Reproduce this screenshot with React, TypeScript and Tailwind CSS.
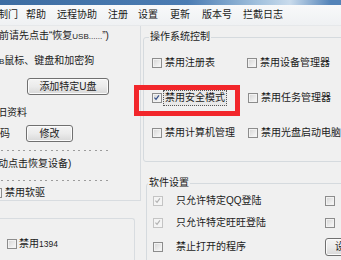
import React from "react";

function Box({ checked = false, disabled = false }: { checked?: boolean; disabled?: boolean }) {
  return (
    <span
      className={
        disabled
          ? "relative block w-[10px] h-[10px] shrink-0 border border-[#c4c4c4] bg-[#f4f4f4]"
          : "relative block w-[10px] h-[10px] shrink-0 border border-[#8c8c8c] bg-gradient-to-br from-[#d4d4d4] to-[#fbfbfb] shadow-[inset_0_0_0_1px_#f2f2f2]"
      }
    >
      {checked && (
        <svg viewBox="0 0 10 10" className="absolute left-0 top-0 w-[8px] h-[8px]">
          <path
            d="M1.8 4.6 L3.8 6.8 L7.4 1.8"
            fill="none"
            stroke={disabled ? "#b0b0b0" : "#2f4a86"}
            strokeWidth="1.4"
          />
        </svg>
      )}
    </span>
  );
}

function Btn({ children, className }: { children: React.ReactNode; className: string }) {
  return (
    <div
      className={
        "flex items-center justify-center shrink-0 border border-[#707070] rounded-[3px] bg-gradient-to-b from-[#f4f4f4] via-[#ebebeb] to-[#d8d8d8] shadow-[inset_0_0_0_1px_#fbfbfb] " +
        className
      }
    >
      {children}
    </div>
  );
}

function Dots() {
  return (
    <div className="flex gap-[3.5px] h-[1px] pl-[1px]">
      {Array.from({ length: 20 }).map((_, i) => (
        <span key={i} className="block w-[2px] h-[1px] bg-[#9c9c9c]" />
      ))}
    </div>
  );
}

export default function App() {
  return (
    <div className="relative w-[341px] h-[260px] overflow-hidden bg-[#f0f0f0] text-[10px] leading-[12px] text-[#1b1b1b] font-['Liberation_Sans','Noto_Sans_CJK_SC',sans-serif] whitespace-nowrap">
      <div className="h-[5px] bg-[linear-gradient(90deg,#3d6da2_0%,#4b7cb3_55%,#9fbfdc_75%,#c9dbec_85%,#5383b8_97%)]" />
      <div className="h-[21px] flex items-center bg-gradient-to-b from-[#f8f9fa] to-[#eff1f3] border-b border-[#e6e8ea]">
        <span className="ml-[-2px] w-[28px] shrink-0">制门</span>
        <span className="w-[31px] shrink-0">帮助</span>
        <span className="w-[51px] shrink-0">远程协助</span>
        <span className="w-[30px] shrink-0">注册</span>
        <span className="w-[32px] shrink-0">设置</span>
        <span className="w-[32px] shrink-0">更新</span>
        <span className="w-[41px] shrink-0">版本号</span>
        <span className="shrink-0">拦截日志</span>
      </div>

      <div className="flex h-[234px]">
        {/* left column */}
        <div className="w-[141px] shrink-0 flex flex-col">
          <div className="h-[177px] border-r border-b border-[#d8dce0] flex flex-col">
            <div className="mt-[3px] h-[14px] leading-[14px] ml-[-1px]">
              前请先点击“恢复<span className="text-[8px]">USB......</span>”)
            </div>
            <div className="mt-[11px] h-[14px] leading-[14px] ml-[-1px]">
              <span className="text-[8px]">B</span>鼠标、键盘和加密狗
            </div>
            <div className="mt-[10px] flex">
              <Btn className="ml-[27px] w-[82px] h-[17px]">添加特定U盘</Btn>
            </div>
            <div className="mt-[11px] h-[14px] leading-[14px] ml-[-3px]">旧资料</div>
            <div className="mt-[5px] h-[17px] flex items-center">
              <span className="w-[26px] shrink-0">码</span>
              <Btn className="w-[47px] h-[17px]">修改</Btn>
            </div>
            <div className="mt-[8px]">
              <Dots />
            </div>
            <div className="mt-[6px] h-[14px] leading-[14px] ml-[-2px]">动点击恢复设备)</div>
            <div className="mt-[9px]">
              <Dots />
            </div>
            <div className="mt-[5px] h-[14px] flex items-center ml-[-8px] gap-[3px]">
              <Box />
              <span>禁用软驱</span>
            </div>
          </div>
          <div className="mt-[17px] w-[135px] h-[60px] border-t border-r border-[#d8dce0] rounded-tr-[3px] pt-[19px]">
            <div className="h-[12px] flex items-center pl-[7px] gap-[2px]">
              <Box />
              <span>
                禁用<span className="text-[8.5px]">1394</span>
              </span>
            </div>
          </div>
        </div>

        {/* right column */}
        <div className="flex-1 flex flex-col">
          <fieldset className="ml-[2px] mt-[5px] w-[215px] h-[131px] shrink-0 border border-[#d5dade] rounded-[3px]">
            <legend className="ml-[5px] px-[1px] h-[12px] leading-[12px]">操作系统控制</legend>
            <div className="pt-[11px] pl-[8px] grid grid-cols-[95px_1fr] grid-rows-[18px_18px_18px] gap-y-[17px]">
              <div className="flex items-center gap-[3px]">
                <Box />
                <span>禁用注册表</span>
              </div>
              <div className="flex items-center gap-[3px]">
                <Box />
                <span>禁用设备管理器</span>
              </div>
              <div className="flex items-center gap-[1px]">
                <Box checked />
                <span className="border border-dotted border-[#555] px-[1px] h-[16px] leading-[14px] bg-[#e8e8e8]">
                  禁用安全模式
                </span>
              </div>
              <div className="flex items-center gap-[3px] pl-[1px]">
                <Box />
                <span>禁用任务管理器</span>
              </div>
              <div className="flex items-center gap-[3px]">
                <Box />
                <span>禁用计算机管理</span>
              </div>
              <div className="flex items-center gap-[3px] pl-[1px]">
                <Box />
                <span>禁用光盘启动电脑</span>
              </div>
            </div>
          </fieldset>

          <fieldset className="ml-[5px] mt-[15px] w-[210px] h-[100px] shrink-0 border border-[#d5dade] rounded-[3px]">
            <legend className="ml-[1px] px-[1px] h-[12px] leading-[12px]">软件设置</legend>
            <div className="pt-[4px] pl-[6px] flex flex-col gap-[6px]">
              <div className="h-[16px] flex items-center">
                <Box checked disabled />
                <span className="ml-[13px] w-[149px] shrink-0">只允许特定QQ登陆</span>
                <Box />
              </div>
              <div className="h-[16px] flex items-center">
                <Box checked disabled />
                <span className="ml-[13px] w-[149px] shrink-0">只允许特定旺旺登陆</span>
                <Box />
              </div>
              <div className="h-[20px] flex items-center">
                <Box />
                <span className="ml-[13px] w-[149px] shrink-0">禁止打开的程序</span>
                <Btn className="w-[40px] h-[18px]">设置</Btn>
              </div>
            </div>
          </fieldset>
        </div>
      </div>

      <div className="absolute left-[134px] top-[85px] w-[106px] h-[31px] border-[5px] border-[#f2262b]" />
    </div>
  );
}
